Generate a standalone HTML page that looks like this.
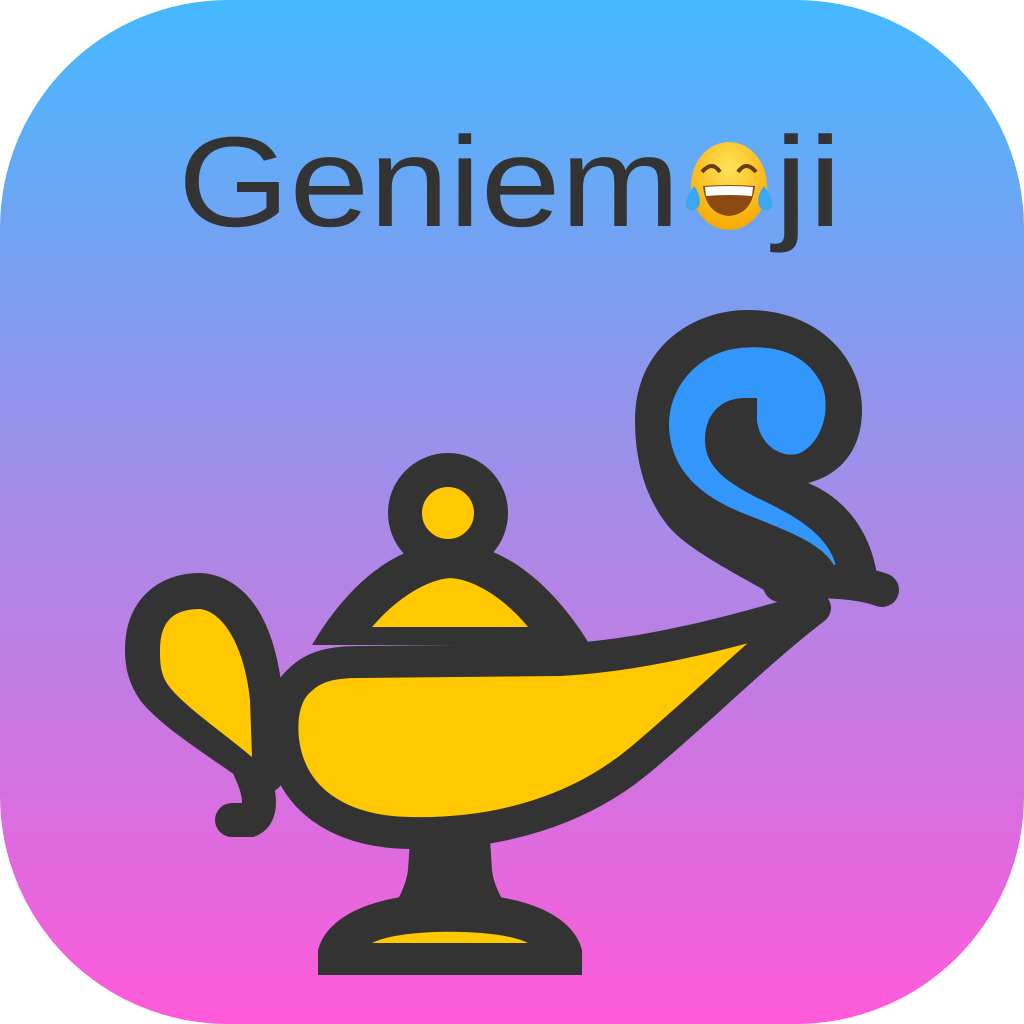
<!DOCTYPE html>
<html><head><style>
html,body{margin:0;padding:0;background:#fff;width:1024px;height:1024px;overflow:hidden}
.bg{position:absolute;left:0;top:0;width:1024px;height:1024px;border-radius:228px;background:linear-gradient(180deg,#45b9ff 0%,#7c9ef0 28%,#a68be8 50%,#cc76e2 72%,#ff5ad9 100%)}
.t{position:absolute;top:109px;font-family:"Liberation Sans",sans-serif;font-size:128px;color:#333;white-space:nowrap;line-height:normal}
svg{position:absolute;left:0;top:0}
</style></head><body>
<div class="bg"></div>
<div class="t" style="left:178px;transform:scaleX(1.12);transform-origin:0 0">Geniem</div>
<div class="t" style="left:774px;transform:scaleX(1.2);transform-origin:0 0">ji</div>
<svg width="1024" height="1024" viewBox="0 0 1024 1024">
<defs><radialGradient id="e" cx="0.5" cy="0.3" r="0.7"><stop offset="0" stop-color="#ffe45a"/><stop offset="1" stop-color="#f7a800"/></radialGradient></defs>
<ellipse cx="729" cy="186" rx="38" ry="44" fill="url(#e)"/>
<path d="M703,186 Q729,184 755,186 Q752,214 729,216 Q706,214 703,186Z" fill="#8a4a10"/>
<path d="M705,187 Q729,185 753,187 L752,196 Q729,194 706,196Z" fill="#fff"/>
<path d="M702,172 Q712,160 720,172 M738,172 Q746,160 756,172" stroke="#6a3a10" stroke-width="4" fill="none"/>
<path d="M694,186 Q684,200 686,207 Q692,214 699,206 Q702,196 694,186Z" fill="#3aa8f0"/>
<path d="M764,186 Q774,200 772,207 Q766,214 759,206 Q756,196 764,186Z" fill="#3aa8f0"/>
<path d="M635,420 C635,350 690,310 748,310 C820,310 862,360 862,410 C862,450 840,475 808,483 C850,500 875,540 878,585 L790,605 C740,575 685,550 665,522 C645,495 635,460 635,420Z" fill="#333"/>
<path d="M757,398 L757,420 C760,450 790,462 805,450 C825,436 830,405 822,385 C805,350 770,345 740,348 C700,352 669,385 669,425 C670,470 700,495 740,512 C790,532 830,545 838,575 C834,545 812,525 772,505 C732,486 705,470 705,440 C705,415 720,398 745,398Z" fill="#3296fb"/>
<path d="M250,770 C262,795 262,815 250,820 L232,820" stroke="#333" stroke-width="34" fill="none" stroke-linecap="round"/>
<path d="M143,650 C143,610 168,591 200,591 C240,594 258,640 264,690 L266,775 C225,745 175,715 155,690 C146,677 143,665 143,650Z" fill="#333" stroke="#333" stroke-width="36" stroke-linejoin="round"/>
<path d="M160,650 C160,620 175,609 200,609 C225,612 245,650 250,700 L252,757 C220,730 175,700 165,680 C160,670 160,660 160,650Z" fill="#ffc800"/>
<path d="M312,645 C350,580 400,543 450,543 C500,543 550,580 590,645Z" fill="#333"/>
<path d="M372,627 C395,600 425,580 450,578 C480,580 510,605 528,627Z" fill="#ffc800"/>
<circle cx="448" cy="513" r="43" fill="#ffc800" stroke="#333" stroke-width="34"/>
<path d="M410,840 L490,840 L492,870 C494,885 500,895 505,905 L395,905 C400,895 406,885 408,870Z" fill="#333"/>
<path d="M318,975 L318,950 C330,905 400,893 450,893 C500,893 570,905 582,950 L582,975Z" fill="#333"/>
<path d="M372,943 C400,928 500,928 528,943Z" fill="#ffc800"/>
<path d="M780,585 C820,578 860,582 882,590" stroke="#333" stroke-width="34" fill="none" stroke-linecap="round"/>
<path d="M300,680 C315,665 335,662 360,662 L560,660 C650,655 730,632 815,608 C760,650 700,710 640,760 C580,810 500,835 410,833 C340,832 290,800 283,740 C280,710 288,690 300,680Z" fill="#ffc800" stroke="#333" stroke-width="32" stroke-linejoin="round"/>
</svg>
</body></html>
